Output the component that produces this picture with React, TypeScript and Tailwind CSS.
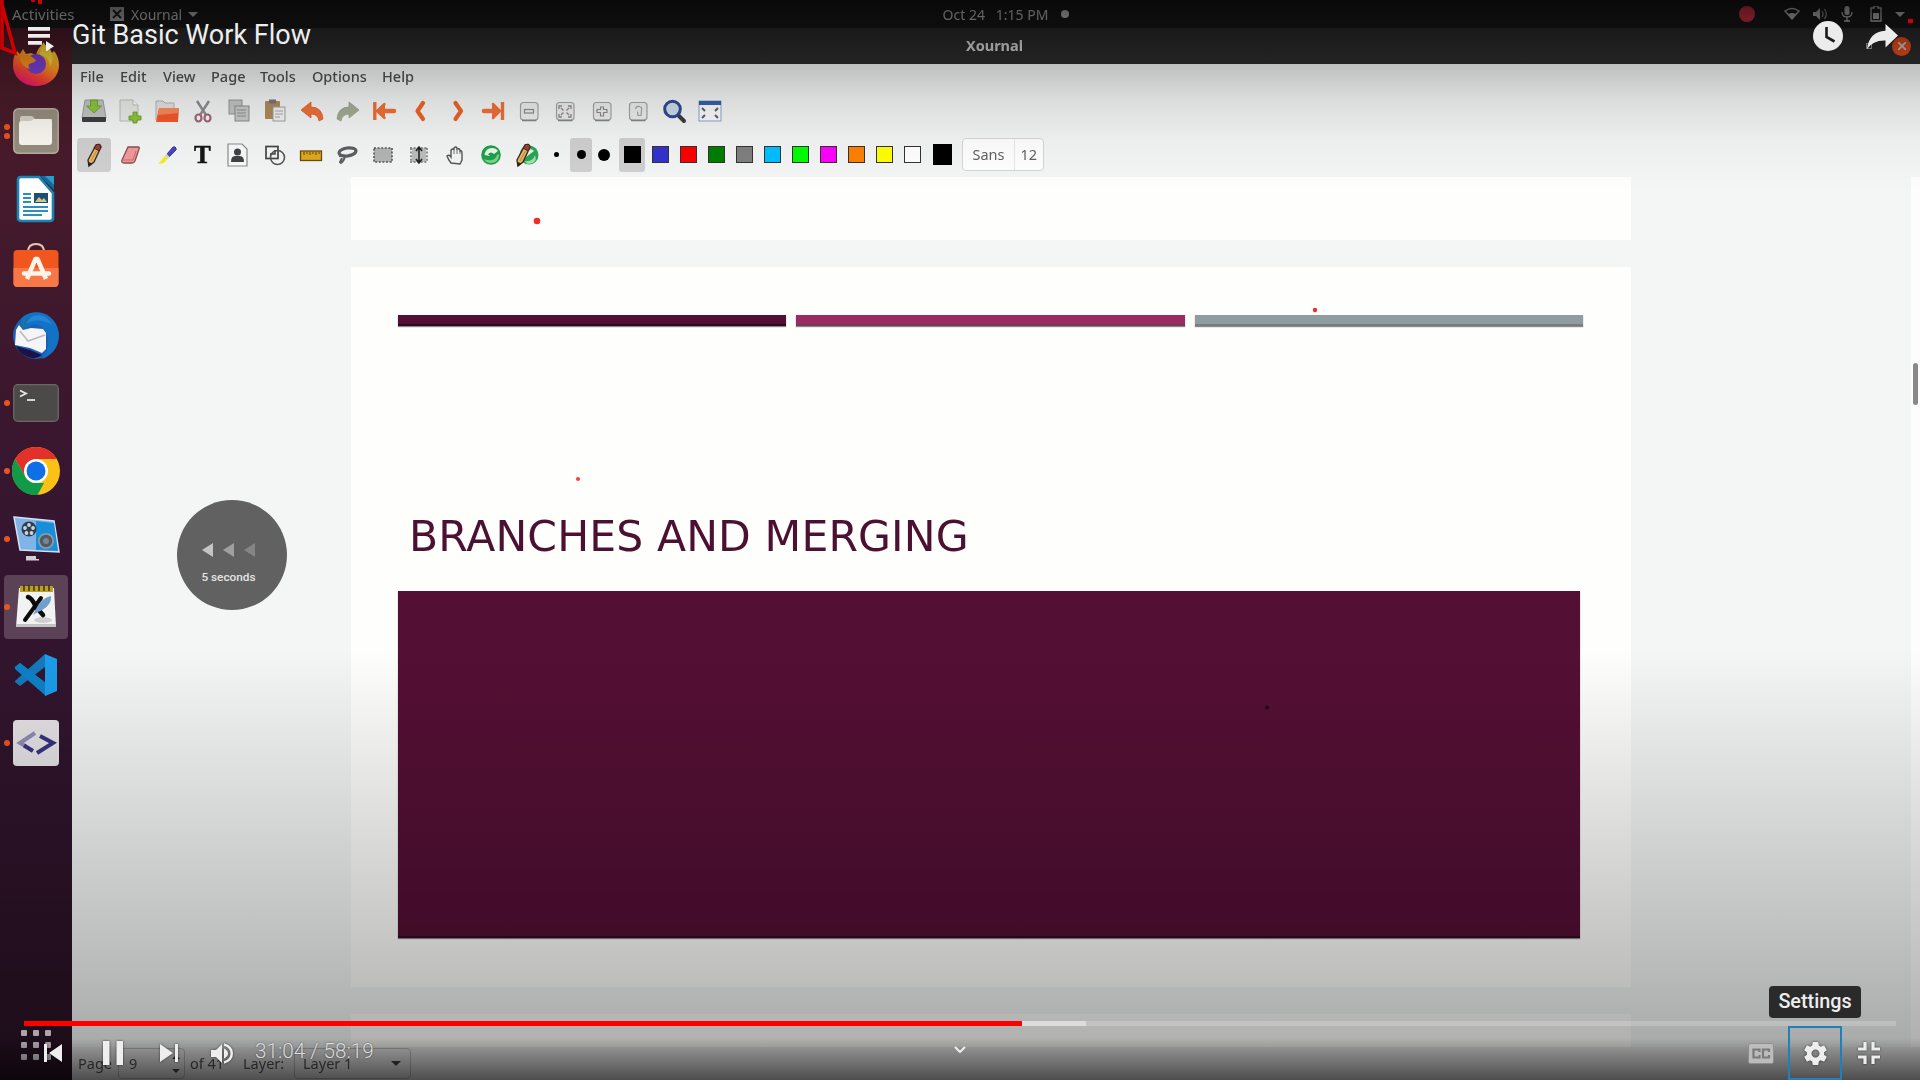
import React from "react";

type P = { children?: React.ReactNode; className?: string; box?: string };

const Ico = ({ children, className = "size-6", box = "0 0 24 24" }: P) => (
  <svg viewBox={box} className={`shrink-0 overflow-visible ${className}`} fill="none">
    {children}
  </svg>
);

/* ---------- dock ---------- */

const dockIcons: { name: string; dots: number; active?: boolean; icon: React.ReactNode }[] = [
  {
    name: "Firefox",
    dots: 0,
    icon: (
      <Ico box="0 0 48 48" className="size-12 -mt-px">
        <defs>
          <linearGradient id="ff" x1="0.8" y1="0" x2="0.3" y2="1">
            <stop offset="0" stopColor="#ffe03a" />
            <stop offset="0.45" stopColor="#ff9a1f" />
            <stop offset="0.75" stopColor="#ff4236" />
            <stop offset="1" stopColor="#e8127c" />
          </linearGradient>
        </defs>
        <path d="M5 12l3 3 3-5 3 5 5-1 5 2c1-5 4-9 8-12 2 5 6 8 8 10l2-2c4 5 5 10 5 14 0 12-10 21-23 21S1 38 1 26c0-6 1-10 4-14z" fill="url(#ff)" />
        <path d="M31 3c0 5-3 8-3 13 5 0 10 5 10 11 4-6 3-14-1-18-3-2-5-4-6-6z" fill="#ffdc3c" />
        <circle cx="24" cy="25" r="10" fill="#7a3fd6" />
        <path d="M8 18c4-3 9-2 12 0l4 3c-1 3-5 3-7 4-1 2 0 4 1 5-6-2-10-6-10-12z" fill="#ff9320" />
      </Ico>
    ),
  },
  {
    name: "Files",
    dots: 2,
    icon: (
      <Ico box="0 0 46 46" className="size-[46px]">
        <rect x="0.8" y="0.8" width="44.4" height="44.4" rx="4.5" fill="#958d7e" stroke="#b5ae9f" strokeWidth="1.5" />
        <path d="M7 10q0-2 2-2h9q2 0 3 2l1 1h17v6H7z" fill="#d8d1c4" />
        <path d="M6 16q0-3 3-3h9l3-2h15q3 0 3 3v20q0 3-3 3H9q-3 0-3-3z" fill="#faf7f1" />
      </Ico>
    ),
  },
  {
    name: "Writer",
    dots: 0,
    icon: (
      <Ico box="0 0 38 46" className="h-[46px] w-[38px]">
        <path d="M4 1h18l14 16v25q0 3-3 3H5q-4 0-4-3V4q0-3 3-3z" fill="#fff" stroke="#1c84b4" strokeWidth="2.6" />
        <path d="M23 0h14v14z" fill="#136a99" />
        <path d="M28 0h9v9z" fill="#23a0cf" />
        <path d="M6 18h8M6 22h8M6 26h8M6 31h25M6 35h25M6 39h19" stroke="#2b8fbd" strokeWidth="1.8" />
        <rect x="17" y="17" width="14" height="10" fill="#1b4f73" />
        <path d="M18 26l4-5 3 3 2-2 3 4z" fill="#d3c58a" />
      </Ico>
    ),
  },
  {
    name: "Software",
    dots: 0,
    icon: (
      <Ico box="0 0 46 46" className="-mt-[5px] size-[46px]">
        <path d="M15 10q0-8 8-8t8 8" stroke="#e8c8ac" strokeWidth="2" />
        <rect x="0.5" y="8" width="45" height="37" rx="4" fill="#f0571f" />
        <path d="M.5 26h45v15q0 4-4 4h-37q-4 0-4-4z" fill="#f87746" />
        <path d="M14 37l8.500-20h2L33 37" stroke="#fff4ea" strokeWidth="4.5" strokeLinecap="butt" strokeLinejoin="round" />
        <path d="M11 31.500h25" stroke="#fff4ea" strokeWidth="4.5" strokeLinecap="round" />
      </Ico>
    ),
  },
  {
    name: "Thunderbird",
    dots: 0,
    icon: (
      <Ico box="0 0 48 48" className="size-12">
        <circle cx="24" cy="25" r="23" fill="#1b5fb6" />
        <path d="M9 8C15 0 30-1 38 6c9 7 11 20 6 30-3 6-9 10-14 12 8-10 9-24 0-32-5-4-12-4-21 6z" fill="#1273c6" />
        <path d="M12 14C17 2 34 0 40 14c-8-6-20-6-28 0z" fill="#2386d6" />
        <path d="M8 15l6-7 5-2q-5 5-6 11l2 3-6 2z" fill="#1c6f9f" />
        <path d="M4 19l3-5 4 5 8-2 12 1 3 4v16l-4 4L18 37 3 34z" fill="#f5f5f6" />
        <path d="M8 20l8 10 17-6" stroke="#b8b8be" strokeWidth="1.5" />
        <path d="M4 35l14 4 12 5q-6 5-14 2Q7 43 4 35z" fill="#1d1248" />
      </Ico>
    ),
  },
  {
    name: "Terminal",
    dots: 1,
    icon: (
      <Ico box="0 0 46 38" className="h-[38px] w-[46px]">
        <rect x="0.7" y="0.7" width="44.6" height="36.6" rx="4" fill="#4b4a49" stroke="#6a6866" strokeWidth="1.3" />
        <path d="M7 6.500l6 3-6 3" stroke="#e6e6e6" strokeWidth="1.8" />
        <path d="M14 16h8" stroke="#e6e6e6" strokeWidth="1.8" />
      </Ico>
    ),
  },
  {
    name: "Chrome",
    dots: 1,
    icon: (
      <Ico box="0 0 48 48" className="size-12">
        <circle cx="24" cy="24" r="24" fill="#fbc116" />
        <path d="M24 0a24 24 0 0 1 20.800 12H24L13.600 30 3.200 12A24 24 0 0 1 24 0z" fill="#e3302a" />
        <path d="M3.200 12 13.600 30q4 6 10.400 6h8L25.500 48A24 24 0 0 1 3.200 12z" fill="#119a48" />
        <circle cx="24" cy="24" r="12" fill="#fff" />
        <circle cx="24" cy="24" r="9.500" fill="#0f6fe4" />
      </Ico>
    ),
  },
  {
    name: "Recorder",
    dots: 1,
    icon: (
      <Ico box="0 0 48 46" className="h-[46px] w-12">
        <path d="M2 1l40 4 5 31-39-2z" fill="#7fb4e8" stroke="#d7dff0" strokeWidth="1.500" />
        <path d="M24 5l18 2 4 28-22-1z" fill="#178fdb" />
        <circle cx="17" cy="13" r="7.500" fill="#333d49" />
        <g fill="#c5d5e6">
          <circle cx="17" cy="9" r="1.900" />
          <circle cx="21" cy="12" r="1.900" />
          <circle cx="19.500" cy="17" r="1.900" />
          <circle cx="14.500" cy="17" r="1.900" />
          <circle cx="13" cy="12" r="1.900" />
        </g>
        <circle cx="34" cy="25" r="8" fill="#8d99a4" />
        <circle cx="34" cy="25" r="6.200" fill="#4f5a64" />
        <circle cx="34" cy="25" r="3" fill="#7b8790" />
        <path d="M14 40h10v3h3v1.500H14z" fill="#cfcfd4" />
      </Ico>
    ),
  },
  {
    name: "Xournal",
    dots: 1,
    active: true,
    icon: (
      <Ico box="0 0 42 44" className="h-11 w-[42px]">
        <path d="M4 3h35l2 39H1z" fill="#f2f2f2" />
        <path d="M1 39h40v3H1z" fill="#c4c4c4" />
        <path d="M5 1h33v6H5z" fill="#bca01f" />
        <path d="M9 0v6M14 0v6M19 0v6M24 0v6M29 0v6M34 0v6" stroke="#3b2f0a" strokeWidth="1.500" />
        <ellipse cx="28" cy="35" rx="9" ry="3" fill="#d0d0d0" />
        <path d="M13 12q4 1 8 10l7 8" stroke="#0b0b0b" strokeWidth="4.500" strokeLinecap="round" />
        <path d="M26 13L10 35" stroke="#0b0b0b" strokeWidth="4" strokeLinecap="round" />
        <path d="M36 11q1 10-13 16l-5 3 4-8q5-9 14-11z" fill="#6f9fcb" />
      </Ico>
    ),
  },
  {
    name: "VS Code",
    dots: 0,
    icon: (
      <Ico box="0 0 44 44" className="size-11">
        <path d="M1 14l5-4 26 21v12z" fill="#1286cf" />
        <path d="M1 28l30-27v13L6 33l-5-4z" fill="#1479bd" />
        <path d="M1 14l5-4 26 20v13L1 16z" fill="#0d80c8" />
        <path d="M31 1l12 5v32l-12 5z" fill="#1b9cea" />
      </Ico>
    ),
  },
  {
    name: "Snippets",
    dots: 1,
    icon: (
      <Ico box="0 0 46 46" className="size-[46px]">
        <rect width="46" height="46" rx="4" fill="#e4e2e4" />
        <path d="M22 13L7 23l6 3.500" stroke="#8f8cb5" strokeWidth="4" />
        <path d="M11 25.500l9 5.500" stroke="#37327c" strokeWidth="4" />
        <path d="M27 16l13 7-16 10" stroke="#37327c" strokeWidth="4" />
      </Ico>
    ),
  },
];

const Dock = () => (
  <aside className="flex h-full w-[72px] shrink-0 flex-col justify-between bg-linear-to-b from-[#4d1b28] via-[#341530] to-[#2a1225] pt-px pb-[20px]">
    <div className="flex flex-col">
      {dockIcons.map((d) => (
        <div key={d.name} className="relative flex h-[68px] w-[72px] items-center justify-center">
          {d.active && <div className="absolute inset-x-1 inset-y-0.5 rounded-[4px] bg-[#5c4257]" />}
          <div className="absolute left-1 flex h-full flex-col justify-center gap-[3px]">
            {Array.from({ length: d.dots }, (_, i) => (
              <span key={i} className="size-[6px] rounded-full bg-[#e95420]" />
            ))}
          </div>
          <div className="relative">{d.icon}</div>
        </div>
      ))}
    </div>
    <div className="grid grid-cols-3 gap-[6px] self-start pl-[21px]">
      {Array.from({ length: 9 }, (_, i) => (
        <span key={i} className="size-[6px] rounded-[1px] bg-[#f3e9f0]" />
      ))}
    </div>
  </aside>
);

/* ---------- toolbar icons ---------- */

const Key = ({ children }: P) => (
  <Ico>
    <rect x="3.500" y="3.500" width="17.500" height="17.500" rx="3" fill="#ececec" stroke="#a3a3a3" strokeWidth="1.200" />
    <path d="M5 21.500h14.500" stroke="#858585" strokeWidth="1.500" />
    {children}
  </Ico>
);

const fileTools: React.ReactNode[] = [
  <Ico>
    <path d="M3 1h18l3 18H0z" fill="#c2c4c4" stroke="#9b9b9b" />
    <rect x="0" y="18" width="24" height="5" rx="1" fill="#3b3f40" />
    <path d="M8.500 1h7v6h4L12 14 4.500 7h4z" fill="#8cc63a" stroke="#5e9420" strokeWidth="0.700" />
  </Ico>,
  <Ico>
    <path d="M2 1h13l5 5v16H2z" fill="#e9e9e7" stroke="#bdbdbb" />
    <path d="M15 1v5h5" stroke="#bdbdbb" fill="#fff" />
    <path d="M15 13h4v4h4v4h-4v3h-4v-3h-4v-4h4z" fill="#8cc63a" stroke="#5f9a1c" strokeWidth="0.800" />
  </Ico>,
  <Ico>
    <path d="M1 21V2h7l2 2h9v7" fill="#e4e3e1" stroke="#b5b3b0" />
    <path d="M4 9h20l-1 14H1z" fill="#f4582a" />
    <path d="M4 9h20v5L3 16z" fill="#fb8a5c" />
  </Ico>,
  <Ico>
    <path d="M6 2l9 14M18 2L9 16" stroke="#8c8f93" strokeWidth="2.500" />
    <ellipse cx="7.500" cy="19" rx="3" ry="3.500" stroke="#a3667a" strokeWidth="2.200" />
    <ellipse cx="16.500" cy="19" rx="3" ry="3.500" stroke="#a3667a" strokeWidth="2.200" />
  </Ico>,
  <Ico>
    <rect x="2" y="1" width="13" height="14" fill="#c4c4c4" stroke="#939393" />
    <rect x="8" y="7" width="14" height="15" fill="#c9c9c9" stroke="#8b8b8b" />
    <path d="M10 11h9M10 14h9M10 17h9" stroke="#8e8e8e" />
  </Ico>,
  <Ico>
    <rect x="2" y="2" width="15" height="18" rx="1" fill="#b18a5b" />
    <rect x="6" y="0.500" width="7" height="4" fill="#777" />
    <rect x="10" y="8" width="12" height="14" fill="#f2f2f2" stroke="#a0a0a0" />
    <path d="M12 12h8M12 15h8M12 18h5" stroke="#aaa" />
  </Ico>,
  <Ico>
    <path d="M1 11l10-8v5q11 0 12 12l-4 2q-1-7-8-7v4z" fill="#ef7038" stroke="#d9541c" strokeWidth="0.700" />
  </Ico>,
  <Ico>
    <path d="M23 11L13 3v5Q2 8 1 20l4 2q1-7 8-7v4z" fill="#a3ad92" stroke="#8f9a7e" strokeWidth="0.700" />
  </Ico>,
  <Ico>
    <path d="M2.800 3v18" stroke="#ef7038" strokeWidth="3.400" />
    <path d="M22 12H9" stroke="#ef7038" strokeWidth="4.500" strokeLinecap="round" />
    <path d="M13 4v16L4 12z" fill="#ef7038" />
    <path d="M12.500 5L5 12l7.500 7" stroke="#ef7038" strokeWidth="2.500" strokeLinecap="round" />
  </Ico>,
  <Ico>
    <path d="M15 4L9.500 12l5.500 8" stroke="#ee6428" strokeWidth="4.200" strokeLinejoin="round" strokeLinecap="round" />
  </Ico>,
  <Ico>
    <path d="M10.500 4L16 12l-5.500 8" stroke="#ee6428" strokeWidth="4.200" strokeLinejoin="round" strokeLinecap="round" />
  </Ico>,
  <Ico>
    <path d="M21.500 3v18" stroke="#ef7038" strokeWidth="3.400" />
    <path d="M3 12h12" stroke="#ef7038" strokeWidth="4.500" strokeLinecap="round" />
    <path d="M11 4v16l9-8z" fill="#ef7038" />
    <path d="M12 5l7 7-7 7" stroke="#ef7038" strokeWidth="2.500" strokeLinecap="round" />
  </Ico>,
  <Key>
    <rect x="7.500" y="10.500" width="9" height="3.500" stroke="#8a8a8a" strokeWidth="1.200" />
  </Key>,
  <Key>
    <path d="M6 10V7h3M15 7h3v3M6 15v3h3M15 18h3v-3M8 9l2.500 2.500M16 9l-2.500 2.500M8 16l2.500-2.500M16 16l-2.500-2.500" stroke="#8a8a8a" strokeWidth="1.300" />
  </Key>,
  <Key>
    <path d="M10.500 8h3v2.500H17v3h-3.500V17h-3v-3.500H7v-3h3.500z" stroke="#8a8a8a" strokeWidth="1.200" strokeLinejoin="round" />
  </Key>,
  <Key>
    <path d="M9.500 10q1-3.500 4-2.500t2 4l-.5 5h-3l-.5-4" stroke="#a3a3a3" strokeWidth="1.200" />
  </Key>,
  <Ico>
    <path d="M16 16l6 6" stroke="#3b3d3f" strokeWidth="4" strokeLinecap="round" />
    <circle cx="10.500" cy="10" r="7.800" fill="#cfdbea" stroke="#2c4c92" strokeWidth="3" />
  </Ico>,
  <Ico>
    <rect x="1" y="2" width="22" height="20" fill="#fbfbfb" stroke="#8aa4c8" />
    <rect x="1" y="2" width="22" height="4" fill="#3562a8" />
    <path d="M4 9l3 3M20 9l-3 3M4 19l3-3M20 19l-3-3" stroke="#59606a" strokeWidth="2" />
  </Ico>,
];

const Pencil = () => (
  <>
    <path d="M14 2q4-2 5 2l-7 15-5 4-1-6z" fill="#e9b765" stroke="#3a2c22" strokeWidth="1.400" />
    <path d="M14 2q4-2 5 2l-2 4-5-3z" fill="#a53c35" stroke="#3a2c22" />
    <path d="M14.500 8L9 18" stroke="#c28a3f" />
    <path d="M6.500 19l0 4.500 4-3z" fill="#222" />
  </>
);

const penTools: React.ReactNode[] = [
  <Ico><Pencil /></Ico>,
  <Ico>
    <path d="M10 4h10q2 0 1 2l-4 12q-1 2-3 2H6q-3 0-2-3z" fill="#f19b9c" stroke="#8f4d50" strokeWidth="1.300" />
    <path d="M4 17h11l3-9" stroke="#c86c70" />
  </Ico>,
  <Ico>
    <path d="M13 11l6-7q2-1 3 1t-1 3l-6 6z" fill="#4846cf" stroke="#2b2b66" strokeWidth="0.800" />
    <path d="M13 11l2.500 3-2 2-3-3z" fill="#d4d4d4" />
    <path d="M10.500 13l3 3-4 4-5 1z" fill="#f3ee17" />
  </Ico>,
  <span className="font-['Liberation_Serif',serif] text-[25px] leading-none font-bold text-[#151515] [-webkit-text-stroke:0.6px_#151515]">T</span>,
  <Ico>
    <path d="M2 1h14l5 5v17H2z" fill="#fafafa" stroke="#8c8c8c" strokeWidth="1.200" />
    <circle cx="11.500" cy="9" r="3.500" fill="#3f4144" />
    <path d="M5 19q0-6 4-6h5q4 0 4 6z" fill="#3f4144" />
  </Ico>,
  <Ico>
    <rect x="3" y="3.500" width="12" height="12" stroke="#444" strokeWidth="1.700" />
    <circle cx="14.500" cy="14.500" r="7" stroke="#555" strokeWidth="1.600" />
    <path d="M7 11h5V7" stroke="#444" strokeWidth="1.500" />
  </Ico>,
  <Ico>
    <rect x="1.500" y="8" width="21" height="9.500" fill="#dfa920" stroke="#6b4d0c" strokeWidth="1.300" />
    <path d="M5 9v3M8 9v2M11 9v3M14 9v2M17 9v3M20 9v2" stroke="#5f450e" />
  </Ico>,
  <Ico>
    <ellipse cx="12.500" cy="9" rx="8.500" ry="4" stroke="#5d5f61" strokeWidth="3.200" transform="rotate(-8 12 9)" />
    <path d="M4 13h6q-1 5-4 7l-1-1 2-4" stroke="#5d5f61" strokeWidth="2" />
  </Ico>,
  <Ico>
    <rect x="3" y="5" width="18" height="14" fill="#b4b4b4" stroke="#555" strokeWidth="1.600" strokeDasharray="2 1.600" />
  </Ico>,
  <Ico>
    <path d="M5 5h14v14H5z" fill="#bdbdbd" />
    <path d="M3 5h18M3 19h18M4 5v14M20 5v14" stroke="#777" strokeWidth="1.600" strokeDasharray="2 1.600" />
    <path d="M12 4v16M9 8l3-4 3 4M9 16l3 4 3-4" stroke="#222" strokeWidth="1.600" />
  </Ico>,
  <Ico>
    <path d="M8 20q-3-4-4-7 2-2 4 1V7q2-2 3 0V5q2-2 3 0v1q2-1 3 1v1q2-1 2 2v7l-2 4z" fill="#f5f5f5" stroke="#555" strokeWidth="1.400" />
    <path d="M11 7v4M14 7v4M17 8v3" stroke="#777" />
  </Ico>,
  <Ico>
    <circle cx="12" cy="12" r="9.800" fill="#1fa04f" />
    <path d="M5.500 12q1-7 7.500-7 4 0 6 3l-4 3q-3-3-6 0l2 2z" fill="#e9f8e6" />
    <path d="M5 16q4 2 8 1 4-1 5-5l2-1q0 9-8 9-5 0-7-4z" fill="#7fd487" />
  </Ico>,
  <Ico>
    <circle cx="14" cy="12" r="9.500" fill="#2ba558" />
    <path d="M12 7q5-2 7 1l-4 3-5 4q-1-6 2-8z" fill="#e4f6e1" />
    <path d="M10 18q8 1 10-6 3 8-6 9-3 0-4-3z" fill="#a6e0aa" />
    <g transform="translate(-4 0)"><Pencil /></g>
  </Ico>,
];

const swatches = ["bg-[#3333cc]", "bg-[#ff0000]", "bg-[#008000]", "bg-[#808080]", "bg-[#00c0ff]", "bg-[#00ff00]", "bg-[#ff00ff]", "bg-[#ff8000]", "bg-[#ffff00]", "bg-white"];

const menus: [string, string][] = [
  ["File", "w-[40px]"],
  ["Edit", "w-[43px]"],
  ["View", "w-[48px]"],
  ["Page", "w-[49px]"],
  ["Tools", "w-[52px]"],
  ["Options", "w-[70px]"],
  ["Help", "w-[50px]"],
];

const Toolbars = () => (
  <header className="flex h-[113px] shrink-0 flex-col">
    <nav className="flex h-[25px] items-center pl-2 text-[14.5px] font-medium text-[#4e4e4e]">
      {menus.map(([m, w]) => (
        <span key={m} className={w}>{m}</span>
      ))}
    </nav>
    <div className="flex h-[43px] items-center pl-1">
      {fileTools.map((t, i) => (
        <div key={i} className="flex w-[36.26px] shrink-0 justify-center">{t}</div>
      ))}
    </div>
    <div className="flex h-[45px] items-center pl-1">
      {penTools.map((t, i) => (
        <div key={i} className={`flex h-[34px] w-[36.12px] shrink-0 items-center justify-center ${i === 0 ? "rounded-[4px] bg-[#d0d0d0] bg-clip-content px-[1px]" : ""}`}>{t}</div>
      ))}
      <div className="flex w-[23px] justify-center"><span className="size-[5px] rounded-full bg-black" /></div>
      <div className="ml-[2px] flex h-[34px] w-[22px] items-center justify-center rounded-[3px] bg-[#d0d0d0]"><span className="size-[9px] rounded-full bg-black" /></div>
      <div className="flex w-[24px] justify-center"><span className="size-3 rounded-full bg-black" /></div>
      <div className="ml-[3px] flex h-[34px] w-[26px] items-center justify-center rounded-[3px] bg-[#d0d0d0]"><span className="size-[17px] bg-black" /></div>
      <div className="ml-[7px] flex items-center gap-[11px]">
        {swatches.map((s) => (
          <span key={s} className={`size-[17px] border border-[#333] ${s}`} />
        ))}
      </div>
      <span className="ml-[12px] h-[21px] w-[19px] bg-black" />
      <div className="ml-[10px] flex h-[33px] w-[82px] items-center rounded-[4px] border border-[#d6d6d6] bg-white text-[14.5px] text-[#606060]">
        <span className="flex h-full w-[52px] items-center border-r border-[#e8e8e8] pl-[9px]">Sans</span>
        <span className="pl-[5px]">12</span>
      </div>
    </div>
  </header>
);

/* ---------- document ---------- */

const Slide = () => (
  <section className="flex h-[720px] w-[1280px] flex-col bg-[#fefefd] pt-[48px] pl-[47px]">
    <div className="flex gap-[10px]">
      <div className="h-[11px] w-[388.4px] border-b-2 border-[#2d0b1e] bg-[#510f33] shadow-[0_1px_1px_#888]" />
      <div className="h-[11px] w-[388.4px] border-b-2 border-[#71395a] bg-[#9b2b63] shadow-[0_1px_1px_#888]" />
      <div className="h-[11px] w-[388.4px] border-b-2 border-[#797b7c] bg-[#8f9da0] shadow-[0_1px_1px_#888]" />
    </div>
    <h1 className="mt-[184px] h-[54px] pl-[11px] font-['DejaVu_Sans',sans-serif] text-[42.5px] leading-[54px] tracking-[0.13px] whitespace-nowrap text-[#4c1030]">
      BRANCHES AND MERGING
    </h1>
    <div className="mt-[27px] h-[347px] w-[1182px] border-b-2 border-[#300a1e] bg-[#540f34] shadow-[0_1px_1px_#888]" />
  </section>
);

const StatusBar = () => (
  <footer className="flex h-[33px] shrink-0 items-center bg-[#efefef] text-[14.5px] text-[#555]">
    <span className="w-[46px] pl-1.5">Page</span>
    <div className="flex h-[31px] w-[67px] items-center justify-between rounded-[4px] border border-[#c0c0c0] pr-1 pl-[10px]">
      <span>9</span>
      <svg viewBox="0 0 8 22" className="h-[22px] w-2 fill-[#444]">
        <path d="M4 2l4 4H0zM8 16H0l4 4z" />
      </svg>
    </div>
    <span className="w-[58px] pl-[5px]">of 41</span>
    <span className="w-[51px]">Layer:</span>
    <div className="flex h-[31px] w-[117px] items-center justify-between rounded-[4px] border border-[#c0c0c0] pr-[9px] pl-[8px]">
      <span>Layer 1</span>
      <svg viewBox="0 0 10 5" className="h-[5px] w-2.5 fill-[#444]"><path d="M0 0h10L5 5z" /></svg>
    </div>
  </footer>
);

const TopBar = () => (
  <div className="grid h-7 shrink-0 grid-cols-[1fr_auto_1fr] items-center bg-[#1a1a1a] text-[14px] text-[#d4d4d4]">
    <div className="flex items-center pl-3">
      <span className="w-[98px] text-[15px]">Activities</span>
      <svg viewBox="0 0 14 14" className="mr-[7px] size-3.5">
        <rect width="14" height="14" fill="#bbb" />
        <path d="M3 3l8 8M11 3l-8 8" stroke="#222" strokeWidth="2" />
      </svg>
      <span>Xournal</span>
      <svg viewBox="0 0 10 5" className="ml-1.5 h-[5px] w-2.5 fill-[#ccc]"><path d="M0 0h10L5 5z" /></svg>
    </div>
    <div className="flex translate-x-[46px] items-center gap-[13px]">
      <span className="whitespace-pre text-[14px]">Oct 24   1:15 PM</span>
      <span className="size-2 rounded-full bg-[#ddd]" />
    </div>
    <div className="flex items-center justify-end pr-[15px]">
      <span className="mr-[29px] size-4 rounded-full bg-[#f0384e]" />
      <svg viewBox="0 0 16 14" className="mr-[12px] h-3.5 w-4"><path d="M1 4q7-5 14 0L8 12z" fill="none" stroke="#ccc" strokeWidth="1.400" /><path d="M4 7q4-2 8 0l-4 5z" fill="#ccc" /></svg>
      <svg viewBox="0 0 16 14" className="mr-[13px] h-3.5 w-4" fill="none"><path d="M1 5h3l4-4v12L4 9H1z" fill="#ccc" /><path d="M10 4q2 3 0 6M12.500 2q3.500 5 0 10" stroke="#999" strokeWidth="1.300" /></svg>
      <svg viewBox="0 0 12 16" className="mr-[17px] h-4 w-3" fill="none"><rect x="3.500" y="0" width="5" height="9" rx="2.500" fill="#ccc" /><path d="M1 6q0 5 5 5t5-5M6 11v4M3 15h6" stroke="#ccc" strokeWidth="1.300" /></svg>
      <svg viewBox="0 0 12 16" className="mr-[13px] h-4 w-3" fill="none"><path d="M4 0h4v2h3v13H1V2h3z" stroke="#ccc" strokeWidth="1.300" /><rect x="3" y="7" width="6" height="6" fill="#ccc" /></svg>
      <svg viewBox="0 0 10 5" className="h-[5px] w-2.5 fill-[#ccc]"><path d="M0 0h10L5 5z" /></svg>
    </div>
  </div>
);

const Desktop = () => (
  <div className="flex h-[1080px] w-[1920px] flex-col bg-[#222] font-['Noto_Sans',sans-serif] blur-[0.5px]">
    <TopBar />
    <div className="flex min-h-0 flex-1">
      <Dock />
      <div className="flex min-w-0 flex-1 flex-col bg-[#f4f6f6]">
        <div className="flex h-9 shrink-0 items-center bg-[#2d2d2d]">
          <span className="flex-1 pl-[51px] text-center text-[14.5px] font-bold text-[#e4e4e4]">Xournal</span>
          <span className="mr-5 size-1.5 border border-[#aaa]" />
          <span className="mr-[9px] flex size-[19px] items-center justify-center rounded-full bg-[#f4511f]">
            <svg viewBox="0 0 8 8" className="size-2"><path d="M0 0l8 8M8 0L0 8" stroke="#ddd" strokeWidth="1.600" /></svg>
          </span>
        </div>
        <Toolbars />
        <div className="flex min-h-0 flex-1">
          <div className="flex min-w-0 flex-1 flex-col gap-[27px] overflow-hidden pl-[279px]">
            <div className="h-[63px] w-[1280px] shrink-0 bg-[#fefefd]" />
            <div className="shrink-0"><Slide /></div>
            <div className="h-[40px] w-[1280px] shrink-0 bg-[#fefefd]" />
          </div>
          <div className="flex w-[9px] bg-[#fdfdfd] pt-[186px] pl-[2px]">
            <div className="h-[42px] w-[5px] rounded-full bg-[#8a8888]" />
          </div>
        </div>
        <StatusBar />
      </div>
    </div>
  </div>
);

/* ---------- player ---------- */

const Annotations = () => (
  <svg viewBox="0 0 1920 1080" className="absolute inset-0 size-full" fill="none">
    <path d="M2 0v48l13 5L1 1" stroke="#d00000" strokeWidth="3.500" />
    <circle cx="33" cy="0" r="2.200" fill="#d00000" />
    <rect x="38" y="0" width="4" height="4" fill="#d00000" />
    <circle cx="537" cy="221" r="3.300" fill="#f52a2a" />
    <circle cx="1315" cy="310" r="2.200" fill="#f52a2a" />
    <circle cx="578" cy="479" r="2" fill="#ff3b3b" />
    <circle cx="1267" cy="707.500" r="2" fill="#1b0712" />
    <rect x="1908" y="19" width="5" height="4" fill="#d00000" />
  </svg>
);

const SeekBack = () => (
  <div className="absolute top-[500px] left-[177px] flex size-[110px] flex-col items-center bg-[#616161] pt-[43px] pr-[7px] font-['Roboto',sans-serif] rounded-full">
    <div className="flex gap-[10px]">
      <svg viewBox="0 0 11 14" className="h-3.5 w-[11px] fill-[#c4c4c4]"><path d="M11 0v14L0 7z" /></svg>
      <svg viewBox="0 0 11 14" className="h-3.5 w-[11px] fill-[#a0a0a0]"><path d="M11 0v14L0 7z" /></svg>
      <svg viewBox="0 0 11 14" className="h-3.5 w-[11px] fill-[#858585]"><path d="M11 0v14L0 7z" /></svg>
    </div>
    <span className="mt-[12px] text-[11.8px] font-medium whitespace-nowrap text-[#e4e4e4]">5 seconds</span>
  </div>
);

const PlayerTop = () => (
  <div className="flex h-[72px] items-start pr-[22px] pl-7">
    <svg viewBox="0 0 26 24" className="mt-[27px] mr-[18px] h-6 w-[26px] fill-[#eeeeee]">
      <path d="M0 0h22v3.700H0zM0 7h22v3.700H0zM0 14h14v3.700H0zM18 14l8 5.300-8 5.200z" />
    </svg>
    <span className="mt-[19px] flex-1 text-[27px] leading-8 text-[#eeeeee]">Git Basic Work Flow</span>
    <svg viewBox="0 0 30 30" className="mt-[21px] mr-[24px] size-[30px]">
      <circle cx="15" cy="15" r="15" fill="#ececec" />
      <path d="M13.500 6v10l8 4.500" fill="none" stroke="#1c1c1c" strokeWidth="2.600" />
    </svg>
    <svg viewBox="0 0 31 25" className="mt-6 h-[25px] w-[31px] fill-[#ececec]">
      <path d="M18.500 0L31 11.500 18.500 23.500V16.500Q6 16 0 25 2 8 18.500 6.800z" />
    </svg>
  </div>
);

const shadow = "drop-shadow-[0_0_1px_rgba(0,0,0,0.6)]";

const PlayerBottom = () => (
  <div className="flex flex-col">
    <div className="flex pr-[59px] justify-end">
      <span className="flex h-8 w-[92px] items-center justify-center rounded-[4px] bg-[#2a2a2a] text-[19.8px] font-medium text-[#eeeeee]">Settings</span>
    </div>
    <div className="mx-6 mt-[3px] flex h-[5px] bg-white/20">
      <div className="w-[997.5px] bg-[#ff0000]" />
      <div className="w-[64.5px] bg-[#dcdcdc]" />
    </div>
    <div className="relative flex h-[54px] items-center pr-[24px] pl-11">
      <svg viewBox="0 0 18 18" className={`mr-[41px] h-[18px] w-[18px] fill-[#eeeeee] ${shadow}`}><path d="M0 0h3v18H0zM18 0v18L5 9z" /></svg>
      <svg viewBox="0 0 20 24" className={`mr-[37px] h-6 w-5 fill-[#eeeeee] ${shadow}`}><path d="M0 0h6.500v24H0zM13.500 0H20v24h-6.500z" /></svg>
      <svg viewBox="0 0 18 18" className={`mr-[33px] h-[18px] w-[18px] fill-[#eeeeee] ${shadow}`}><path d="M15 0h3v18h-3zM0 0v18l13-9z" /></svg>
      <svg viewBox="0 0 22 21" className={`mr-[22px] h-[21px] w-[22px] fill-[#eeeeee] ${shadow}`}>
        <path d="M0 7h5l6-6v19l-6-6H0zM13 5.500q4 2 4 5t-4 5zM13 .3q9 2.500 9 10.200T13 20.700v-2.400q6.500-2.200 6.500-7.800T13 2.700z" />
      </svg>
      <span className="mb-[2px] text-[20.7px] font-light text-[#dddddd] [text-shadow:0_0_2px_rgba(0,0,0,0.5)]">31:04 / 58:19</span>
      <svg viewBox="0 0 12 7" className="absolute top-[20px] left-[954px] h-[7px] w-3" fill="none"><path d="M1 1l5 5 5-5" stroke="#eeeeee" strokeWidth="2" /></svg>
      <div className="ml-auto flex items-center">
        <svg viewBox="0 0 26 21" className="mr-[14px] h-[21px] w-[26px]" fill="none">
          <rect x="0.500" y="0.500" width="25" height="20" rx="2" fill="#bcbcbc" stroke="#8d8d8d" />
          <path d="M11.500 9V6.500h-6v8h6V12M21 9V6.500h-6v8h6V12" stroke="#7a7a7a" strokeWidth="2.200" />
        </svg>
        <div className="flex size-[54px] items-center justify-center border-2 border-[#1f80bb]">
          <svg viewBox="2 2 20 20" className={`size-[23px] fill-[#eeeeee] ${shadow}`}>
            <path d="M19.430 12.980c.040-.320.070-.640.070-.980s-.030-.660-.070-.980l2.110-1.650c.190-.150.240-.420.120-.640l-2-3.460c-.120-.220-.390-.300-.610-.220l-2.490 1c-.520-.400-1.080-.730-1.690-.980l-.380-2.650C14.460 2.180 14.250 2 14 2h-4c-.250 0-.460.180-.490.420l-.380 2.650c-.610.250-1.170.590-1.690.980l-2.490-1c-.230-.090-.490 0-.610.220l-2 3.460c-.130.220-.070.490.120.640l2.110 1.650c-.040.320-.070.650-.070.980s.030.660.070.980l-2.110 1.650c-.190.150-.240.420-.120.640l2 3.460c.120.220.390.300.610.220l2.490-1c.520.400 1.080.730 1.690.980l.380 2.650c.030.240.240.420.490.420h4c.250 0 .460-.180.490-.420l.380-2.650c.610-.250 1.170-.590 1.690-.980l2.490 1c.230.090.490 0 .610-.220l2-3.460c.120-.220.070-.490-.120-.640zM12 15.500c-1.930 0-3.500-1.570-3.500-3.500s1.570-3.500 3.500-3.500 3.500 1.570 3.500 3.500-1.570 3.500-3.500 3.500z" />
          </svg>
        </div>
        <div className="flex size-[54px] items-center justify-center">
          <svg viewBox="0 0 22 22" className={`size-[22px] ${shadow}`} fill="none"><path d="M7 0v7H0M15 0v7h7M0 15h7v7M22 15h-7v7" stroke="#eeeeee" strokeWidth="3.200" /></svg>
        </div>
      </div>
    </div>
  </div>
);

export default function App() {
  return (
    <main className="relative h-[1080px] w-[1920px] overflow-hidden bg-[#333]">
      <Desktop />
      <div className="absolute inset-x-0 top-0 h-[190px] bg-[linear-gradient(to_bottom,rgba(0,0,0,0.66)_0px,rgba(0,0,0,0.55)_14px,rgba(0,0,0,0.33)_45px,rgba(0,0,0,0.22)_65px,rgba(0,0,0,0.1)_100px,rgba(0,0,0,0.03)_140px,transparent_190px)]" />
      <div className="absolute inset-x-0 bottom-0 h-[430px] bg-[linear-gradient(to_bottom,transparent_0px,rgba(0,0,0,0.107)_140px,rgba(0,0,0,0.235)_310px,rgba(0,0,0,0.3)_388px,rgba(0,0,0,0.42)_400px,rgba(0,0,0,0.68)_430px)]" />
      <Annotations />
      <SeekBack />
      <div className="absolute inset-0 flex flex-col justify-between font-['Roboto',sans-serif]">
        <PlayerTop />
        <PlayerBottom />
      </div>
    </main>
  );
}
